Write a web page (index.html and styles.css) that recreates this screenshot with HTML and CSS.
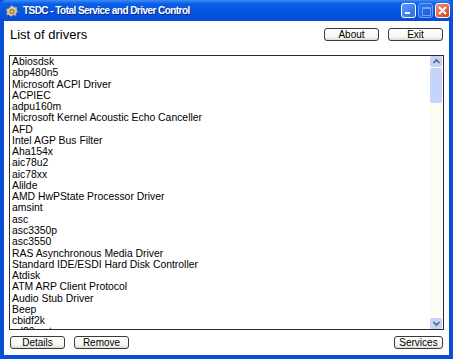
FILE: index.html
```html
<!DOCTYPE html>
<html lang="en">
<head>
  <meta charset="UTF-8" />
  <title>TSDC - Total Service and Driver Control</title>
  <link rel="stylesheet" href="styles.css">
</head>
<body>
  <div class="window">
    <div class="titlebar">
      <svg class="app-icon" width="14" height="14" viewBox="0 0 14 14">
        <path d="M7 1 L9 3 L12 3 L12 6 L13 8 L11 9 L11 12 L8 11 L6 13 L4 11 L1 11 L2 8 L1 5 L4 4 Z" fill="#c8c8c8" stroke="#6a6a6a" stroke-width="0.8"/>
        <circle cx="7" cy="7.5" r="2.2" fill="#e8b040" stroke="#7a5a10" stroke-width="0.7"/>
      </svg>
      <span class="title-text">TSDC - Total Service and Driver Control</span>
      <div class="caption-buttons">
        <span class="cap-btn cap-min"><i></i></span>
        <span class="cap-btn cap-max disabled"><i></i></span>
        <span class="cap-btn cap-close">
          <svg width="15" height="15" viewBox="0 0 15 15"><path d="M4 4 L11 11 M11 4 L4 11" stroke="#fff" stroke-width="2"/></svg>
        </span>
      </div>
    </div>

    <div class="client">
      <div class="header">
        <h1>List of drivers</h1>
        <div class="actions">
          <button class="btn btn-wide">About</button>
          <button class="btn btn-wide">Exit</button>
        </div>
      </div>

      <div class="listbox">
        <ul class="items">
          <li>Abiosdsk</li>
          <li>abp480n5</li>
          <li>Microsoft ACPI Driver</li>
          <li>ACPIEC</li>
          <li>adpu160m</li>
          <li>Microsoft Kernel Acoustic Echo Canceller</li>
          <li>AFD</li>
          <li>Intel AGP Bus Filter</li>
          <li>Aha154x</li>
          <li>aic78u2</li>
          <li>aic78xx</li>
          <li>Alilde</li>
          <li>AMD HwPState Processor Driver</li>
          <li>amsint</li>
          <li>asc</li>
          <li>asc3350p</li>
          <li>asc3550</li>
          <li>RAS Asynchronous Media Driver</li>
          <li>Standard IDE/ESDI Hard Disk Controller</li>
          <li>Atdisk</li>
          <li>ATM ARP Client Protocol</li>
          <li>Audio Stub Driver</li>
          <li>Beep</li>
          <li>cbidf2k</li>
          <li>cd20xrnt</li>
        </ul>
        <div class="scrollbar">
          <span class="sb-arrow sb-up">
            <svg width="11" height="11" viewBox="0 0 11 11"><path d="M2.5 7 L5.5 4 L8.5 7" fill="none" stroke="#4d6185" stroke-width="1.6"/></svg>
          </span>
          <div class="sb-track">
            <span class="sb-thumb"></span>
          </div>
          <span class="sb-arrow sb-down">
            <svg width="11" height="11" viewBox="0 0 11 11"><path d="M2.5 4 L5.5 7 L8.5 4" fill="none" stroke="#4d6185" stroke-width="1.6"/></svg>
          </span>
        </div>
      </div>

      <div class="footer">
        <div class="actions">
          <button class="btn btn-wide">Details</button>
          <button class="btn btn-wide">Remove</button>
        </div>
        <button class="btn btn-narrow">Services</button>
      </div>
    </div>
  </div>
</body>
</html>
```

FILE: styles.css
```css
html, body {
  margin: 0;
  padding: 0;
  background: #0a4fd8;
}

.window {
  width: 453px;
  height: 359px;
  display: flex;
  flex-direction: column;
  background: #0a4fd8;
  border-radius: 6px 6px 0 0;
  overflow: hidden;
}

.titlebar {
  height: 21px;
  flex: none;
  display: flex;
  align-items: center;
  padding: 0 3px 0 5px;
  background: linear-gradient(to bottom, #3c8cf8 0%, #0a5fe6 18%, #0454e2 60%, #0a4bd2 100%);
  color: #fff;
}

.app-icon {
  flex: none;
  margin-right: 4px;
}

.title-text {
  flex: 1;
  font-family: "Liberation Sans", Arial, sans-serif;
  font-weight: bold;
  font-size: 10px;
  letter-spacing: -0.55px;
  text-shadow: 1px 1px 0 #0a2a80;
  white-space: nowrap;
}

.caption-buttons {
  display: flex;
  gap: 2px;
}

.cap-btn {
  width: 15px;
  height: 15px;
  box-sizing: border-box;
  border: 1px solid #fff;
  border-radius: 3px;
  background: linear-gradient(135deg, #5b9bfa, #2a6ae8);
  position: relative;
  display: block;
}

.cap-btn.disabled {
  opacity: 0.45;
}

.cap-min i {
  position: absolute;
  left: 3px;
  bottom: 3px;
  width: 5px;
  height: 2px;
  background: #fff;
}

.cap-max i {
  position: absolute;
  left: 3px;
  top: 3px;
  width: 7px;
  height: 6px;
  border: 1px solid #fff;
  border-top-width: 2px;
}

.cap-close {
  background: linear-gradient(135deg, #f09070, #d8441c);
}

.cap-close svg {
  position: absolute;
  left: -1px;
  top: -1px;
}

.client {
  flex: 1;
  margin: 0 4px 4px 4px;
  background: #fff;
  display: flex;
  flex-direction: column;
  padding: 0 5px;
  font-family: "Liberation Sans", Arial, sans-serif;
  color: #000;
}

.header {
  height: 34px;
  display: flex;
  align-items: flex-start;
  justify-content: space-between;
  padding-left: 1px;
}

h1 {
  margin: 6px 0 0 0;
  font-size: 13px;
  line-height: 15px;
  font-weight: normal;
}

.actions {
  display: flex;
  gap: 9px;
}

.header .actions {
  margin: 7px 1px 0 0;
}

.btn {
  height: 13px;
  box-sizing: border-box;
  padding: 0;
  border: 1px solid #3a3a3a;
  border-radius: 3px;
  background: linear-gradient(to bottom, #ffffff 0%, #f6f6f2 70%, #dedad0 100%);
  font-family: "Liberation Sans", Arial, sans-serif;
  font-size: 10px;
  line-height: 11px;
  color: #000;
}

.btn-wide {
  width: 55px;
}

.btn-narrow {
  width: 49px;
}

.listbox {
  height: 273px;
  flex: none;
  border: 1px solid #2a2a2a;
  display: flex;
  overflow: hidden;
}

.items {
  flex: 1;
  list-style: none;
  margin: 0;
  padding: 0 0 0 2px;
  font-size: 10.4px;
  line-height: 11.27px;
  overflow: hidden;
  white-space: nowrap;
}

.scrollbar {
  width: 12px;
  flex: none;
  display: flex;
  flex-direction: column;
  background: #fdfdf6;
  margin-right: 1px;
}

.sb-arrow {
  height: 11px;
  flex: none;
  display: flex;
  align-items: center;
  justify-content: center;
  background: #c4d3fa;
  border-radius: 2px;
}

.sb-track {
  flex: 1;
  padding-top: 1px;
}

.sb-thumb {
  display: block;
  height: 35px;
  background: #c6d3fa;
  border-radius: 2px;
}

.footer {
  flex: 1;
  display: flex;
  align-items: center;
  justify-content: space-between;
  padding-left: 1px;
  padding-right: 1px;
}
```
